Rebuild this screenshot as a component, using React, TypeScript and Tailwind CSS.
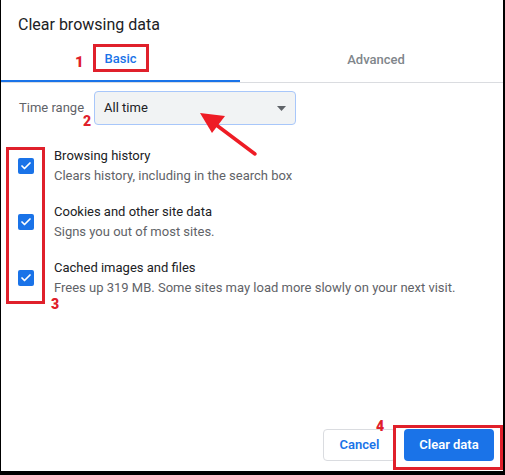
import { Check } from 'lucide-react'

const items = [
  { title: 'Browsing history', sub: 'Clears history, including in the search box' },
  { title: 'Cookies and other site data', sub: 'Signs you out of most sites.' },
  { title: 'Cached images and files', sub: 'Frees up 319 MB. Some sites may load more slowly on your next visit.' },
]

function CheckBox() {
  return (
    <div className="flex h-4 w-4 shrink-0 items-center justify-center rounded-[2px] bg-[#1a73e8]">
      <Check className="h-3 w-3 text-white" strokeWidth={3.5} />
    </div>
  )
}

export default function App() {
  return (
    <div className="relative h-[475px] w-[505px] bg-black pb-[4px] pl-[1px] pr-[2px] font-['Roboto',sans-serif]">
      <div className="flex h-full flex-col overflow-hidden bg-white">
        <h2 className="pl-[17px] pt-[15px] text-[16px] leading-5 text-[#202124]">Clear browsing data</h2>

        {/* tabs */}
        <div className="mt-[11px] flex border-b border-[#dadce0]">
          <div className="-mb-px flex h-[36px] w-[239px] shrink-0 items-center justify-center border-b-2 border-[#1a73e8] pb-[8px] text-[13px] font-medium text-[#1a73e8]">
            Basic
          </div>
          <div className="flex h-[36px] w-[272px] shrink-0 items-center justify-center pb-[9px] text-[13px] font-medium text-[#80868b]">
            Advanced
          </div>
        </div>

        {/* time range */}
        <div className="mt-[8px] flex items-center gap-[10px] pl-[18px]">
          <span className="text-[13px] text-[#5f6368]">Time range</span>
          <div className="flex h-[34px] w-[202px] items-center justify-between rounded-[4px] border border-[#a8c7fa] bg-[#f1f3f4] pl-[9px] pr-[9px]">
            <span className="text-[13px] text-[#202124]">All time</span>
            <svg width="9" height="5" viewBox="0 0 9 5">
              <path d="M0 0 L9 0 L4.5 5 Z" fill="#5f6368" />
            </svg>
          </div>
        </div>

        {/* options */}
        <div className="mt-[21px] flex flex-col gap-[16px] pl-[17px]">
          {items.map(it => (
            <div key={it.title} className="flex items-center gap-[20px]">
              <CheckBox />
              <div className="flex flex-col text-[13px] leading-5">
                <span className="text-[#202124]">{it.title}</span>
                <span className="text-[#5f6368]">{it.sub}</span>
              </div>
            </div>
          ))}
        </div>

        {/* buttons */}
        <div className="mt-auto flex justify-end gap-[8px] pb-[10px] pr-[9px]">
          <button className="h-[32px] w-[73px] rounded-[4px] border border-[#dadce0] bg-white text-[13px] font-semibold text-[#1a73e8]">
            Cancel
          </button>
          <button className="h-[32px] w-[90px] rounded-[4px] bg-[#1a73e8] text-[13px] font-semibold text-white">
            Clear data
          </button>
        </div>
      </div>

      {/* annotations */}
      <div className="absolute left-[93px] top-[44px] h-[28px] w-[56px] border-[3px] border-[#e0202b]" />
      <span className="absolute left-[75px] top-[55px] text-[15px] font-black leading-none text-[#e0202b]">1</span>

      <span className="absolute left-[83px] top-[114px] text-[14px] font-black leading-none text-[#e0202b]">2</span>
      <svg className="absolute left-[195px] top-[107px]" width="70" height="52" viewBox="0 0 70 52">
        <line x1="60" y1="47" x2="20" y2="17" stroke="#ee1c25" strokeWidth="3.5" strokeLinecap="round" />
        <path d="M5 6 L30 9 L17 26 Z" fill="#ee1c25" />
      </svg>

      <div className="absolute left-[6px] top-[147px] h-[157px] w-[39px] border-[3px] border-[#e0202b]" />
      <span className="absolute left-[51px] top-[297px] text-[14px] font-black leading-none text-[#e0202b]">3</span>

      <div className="absolute left-[393px] top-[425px] h-[45px] w-[110px] border-[3px] border-[#e0202b]" />
      <span className="absolute left-[376px] top-[419px] text-[14px] font-black leading-none text-[#e0202b]">4</span>
    </div>
  )
}
